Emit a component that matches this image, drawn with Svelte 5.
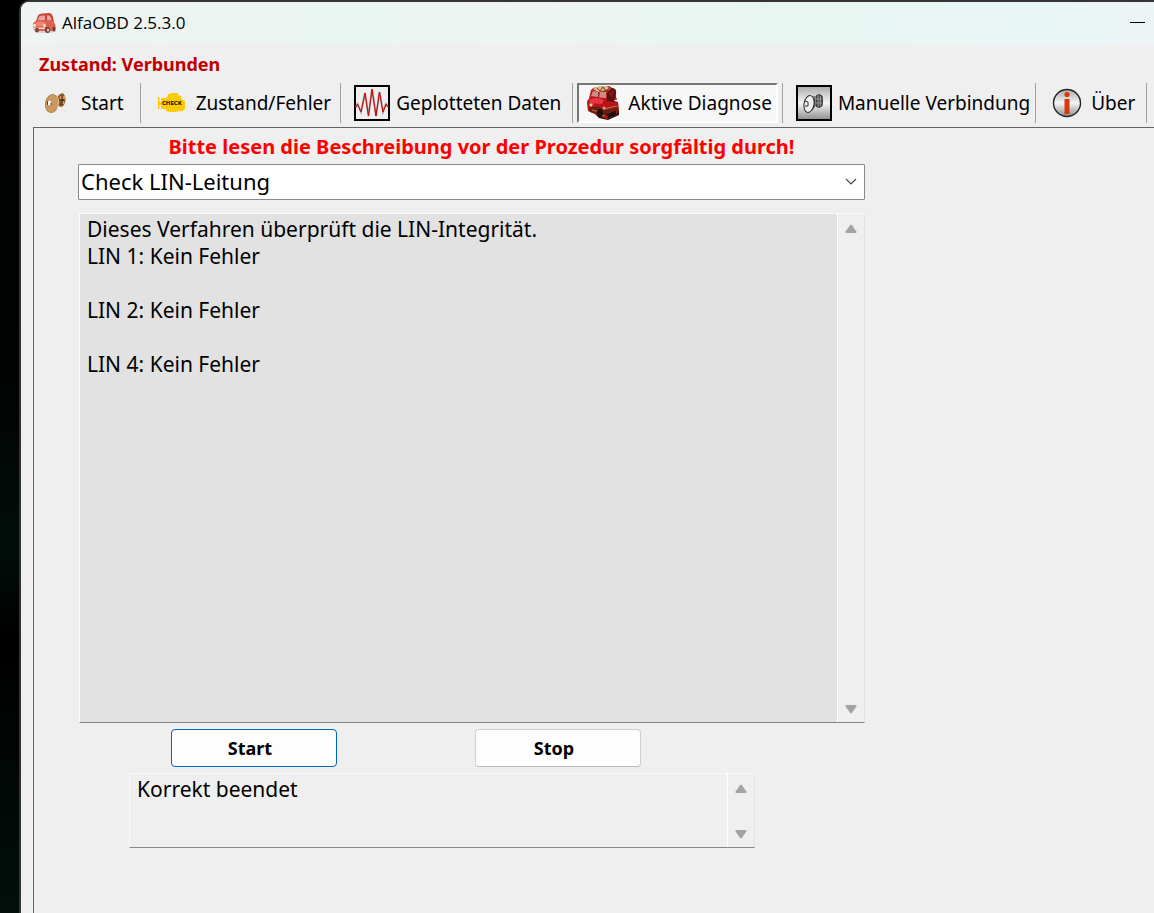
<script lang="ts">
	const procedures = ['Check LIN-Leitung'];
	const tabs = [
		{ id: 'start', label: 'Start' },
		{ id: 'faults', label: 'Zustand/Fehler' },
		{ id: 'plot', label: 'Geplotteten Daten' },
		{ id: 'active', label: 'Aktive Diagnose' },
		{ id: 'manual', label: 'Manuelle Verbindung' },
		{ id: 'about', label: 'Über' }
	];

	let current = $state('active');
	let procedure = $state(procedures[0]);
	let log = $state(
		'Dieses Verfahren überprüft die LIN-Integrität.\nLIN 1: Kein Fehler\n\nLIN 2: Kein Fehler\n\nLIN 4: Kein Fehler'
	);
	let result = $state('Korrekt beendet');

	function start() {
		result = 'Korrekt beendet';
	}

	function stop() {
		result = '';
	}
</script>

{#snippet scrollbar()}
	<div class="scrollbar" aria-hidden="true">
		<svg width="12" height="10" viewBox="0 0 12 10">
			<path d="M5 1.2Q6 0 7 1.2L11.4 7.5Q12 9 10.5 9H1.5Q0 9 .6 7.5Z" fill="#a3a3a3" />
		</svg>
		<svg width="12" height="10" viewBox="0 0 12 10">
			<path d="M5 8.8Q6 10 7 8.8L11.4 2.5Q12 1 10.5 1H1.5Q0 1 .6 2.5Z" fill="#a3a3a3" />
		</svg>
	</div>
{/snippet}

<div class="desktop">
	<div class="window">
		<header class="titlebar">
			<svg width="24" height="22" viewBox="0 0 24 22">
				<ellipse cx="13" cy="19" rx="11" ry="2" fill="#d9cdca" />
				<path d="M4 9 6 3.500Q7 1.500 11 1.500L17 1Q20 1 21 5L22 10Z" fill="#c9473c" />
				<path d="M5.500 8.500 7.300 4.500Q8 3.500 13 3.500v5ZM15 3.500H17.500q1.500 1 2 5H15Z" fill="#e9a79e" />
				<path d="M1 12Q2 8.500 7 8.500L19 8.500Q23.500 10 23.500 14V17L20 19H5L1 17Z" fill="#e0604f" />
				<path d="M3 11Q8 8.500 14 11L13 14H4Z" fill="#f28573" />
				<path d="M1 15.500H13V17H1Z" fill="#f6d8cc" />
				<circle cx="2.500" cy="13.500" r="1.400" fill="#fff0dc" />
				<circle cx="12.500" cy="13.500" r="1.500" fill="#ffe3c2" />
				<ellipse cx="5" cy="18" rx="2" ry="2.500" fill="#7b4a44" />
				<ellipse cx="15.500" cy="18" rx="2.500" ry="3" fill="#6b3d38" />
				<ellipse cx="16" cy="18" rx="1.200" ry="1.600" fill="#ddcac3" />
				<ellipse cx="22" cy="17" rx="1.500" ry="2.500" fill="#703c35" />
			</svg>
			<h1>AlfaOBD 2.5.3.0</h1>
			<button class="minimize" aria-label="Minimieren"></button>
		</header>

		<p class="status">Zustand: Verbunden</p>

		<nav class="toolbar">
			{#each tabs as tab (tab.id)}
				<div class="slot">
					<button class="tab {tab.id}" class:pressed={current === tab.id} onclick={() => (current = tab.id)}>
						{#if tab.id === 'start'}
							<svg width="24" height="24" viewBox="0 0 24 24">
								<path d="M14 5Q17 1 20 3Q23 8 20 14Q17 18 14 14Z" fill="#8f6030" />
								<path d="M16 5h2v3h-2zM19 5h2v3h-2zM17 10h3v3h-3z" fill="#d9a25c" />
								<path d="M18 4v10M20 8l-4 6M15 9h5" stroke="#4c2c10" />
								<ellipse cx="8" cy="12.500" rx="6.500" ry="9" transform="rotate(12 8 12.500)" fill="#cc9862" stroke="#b5824f" />
								<path d="M13 5q3 5 0 13" fill="none" stroke="#e3c39d" />
								<path d="M4 10h3v4H4z" fill="#fff" />
								<path d="M3.500 10v4M6 13h2" stroke="#5b3a1d" />
								<path d="M17 18l5 2M20 0v2" stroke="#eee0b4" />
							</svg>
						{:else if tab.id === 'faults'}
							<svg width="28" height="22" viewBox="0 0 28 22">
								<path d="M0 5h1.500v5H3V6h5l2-2V2h3V1h7v2l3 1v3l4 2v8l-2 2h-4l-3 1H10l-3-3H3v-4H1.500v4H0Z" fill="#fc0" />
								<text x="4" y="13" font-size="6" font-weight="700">CHECK</text>
							</svg>
						{:else if tab.id === 'plot'}
							<svg width="36" height="36" viewBox="0 0 36 36">
								<rect x="1" y="1" width="34" height="34" fill="#efefef" stroke="#000" stroke-width="2" />
								<path d="M2 22 3.500 19 7 27 11 8 14.500 31 18 4 22 31 25.500 7 29 27 32 19 34 22" fill="none" stroke="#999" stroke-width="1.800" />
								<path d="M2 22 3.500 19 7 27 11 8 14.500 31 18 4 22 31 25.500 7 29 27 32 19 34 22" fill="none" stroke="#d40000" />
							</svg>
						{:else if tab.id === 'active'}
							<svg width="34" height="36" viewBox="0 0 34 36">
								<path d="M6 27 12 33 21 35 32 30V25Z" fill="#2a100b" />
								<path d="M2 13 4 5Q6 2 12 2L22 1 27 4 30 15Z" fill="#b52226" />
								<path d="M6 4 12 1 20 1 23 4 11 7Z" fill="#d9b98c" />
								<path d="M10 3l3 3 3-4 3 4 3-3" fill="none" stroke="#693c21" />
								<path d="M4 11 6 6 11 7V12ZM13 7H19V13H12Z" fill="#c98e88" />
								<path d="M0 18Q0 13 6 12L18 13 31 17 32 25 29 30 20 34 10 30 1 26Z" fill="#b51419" />
								<path d="M2 15Q9 11 17 15L15 19 3 18Z" fill="#ea3340" />
								<path d="M20 8 25 3Q30 3 29 9L27 17 20 16Z" fill="#5e0f10" />
								<path d="M22 9l5-4-2 8Z" fill="#8d1515" />
								<path d="M2 22 13 22 18 25 30 22 31 26 19 31 3 27Z" fill="#6b1d13" />
								<path d="M2 19h5M17 24l13-3M5 25l8 2M10 29l8 2" stroke="#c07a40" />
								<circle cx="4" cy="20" r="1.500" fill="#ffd1a6" />
								<circle cx="17" cy="23" r="1.500" fill="#e9a06b" />
								<ellipse cx="13" cy="28" rx="3" ry="4" fill="#220f0b" />
								<path d="M20 29l9-3v4l-8 3z" fill="#160b09" />
							</svg>
						{:else if tab.id === 'manual'}
							<svg width="36" height="36" viewBox="0 0 36 36">
								<defs>
									<linearGradient id="metal" x2="0" y2="1">
										<stop stop-color="#aaa" />
										<stop offset=".5" stop-color="#f5f5f5" />
										<stop offset="1" stop-color="#8d8d8d" />
									</linearGradient>
								</defs>
								<rect x="1" y="1" width="34" height="34" fill="url(#metal)" stroke="#000" stroke-width="2" />
								<path d="M20 11q3-3 6 0 1 5 0 10-4 3-6 0Z" fill="#555" stroke="#333" />
								<path d="M22 10v12M24.500 11v10M20 14h6M20 18h6" stroke="#aaa" stroke-width=".7" />
								<ellipse cx="13" cy="19" rx="5" ry="8.500" transform="rotate(10 13 19)" fill="#eee" stroke="#222" />
								<path d="M9 16l3 1v4H9M18 11l1 10-3 4" fill="none" stroke="#333" />
							</svg>
						{:else}
							<svg width="30" height="30" viewBox="0 0 30 30">
								<circle cx="15" cy="15" r="13.500" fill="url(#metal)" stroke="#222" stroke-width="1.400" />
								<circle cx="15" cy="6.500" r="2.600" fill="#d63a0c" />
								<path d="M12.500 11h5v15h-5z" fill="#d63a0c" />
							</svg>
						{/if}
						<span>{tab.label}</span>
					</button>
				</div>
			{/each}
		</nav>

		<main class="page">
			<form class="procedure" onsubmit={(e) => e.preventDefault()}>
				<label for="procedure">Bitte lesen die Beschreibung vor der Prozedur sorgfältig durch!</label>
				<div class="picker">
					<select id="procedure" bind:value={procedure}>
						{#each procedures as name}
							<option>{name}</option>
						{/each}
					</select>
					<svg class="chevron" width="12" height="8" viewBox="0 0 12 8">
						<path d="M1 1l5 5 5-5" fill="none" stroke="#444" stroke-width="1.100" />
					</svg>
				</div>

				<div class="memo log">
					<textarea readonly aria-label="Beschreibung" value={log}></textarea>
					{@render scrollbar()}
				</div>

				<div class="actions">
					<button type="button" class="default" onclick={start}>Start</button>
					<button type="button" onclick={stop}>Stop</button>
				</div>

				<div class="memo result">
					<textarea readonly aria-label="Ergebnis" value={result}></textarea>
					{@render scrollbar()}
				</div>
			</form>
		</main>
	</div>
</div>

<style>
	:global(body) {
		margin: 0;
		background: #020504;
	}

	* {
		box-sizing: border-box;
	}

	.desktop {
		min-height: 100vh;
		padding-left: 19px;
		display: flex;
		overflow: hidden;
		background: linear-gradient(#000 0%, #010303 40%, #020d0a 60%, #000 70%, #020f0b 100%);
		font-family: "Noto Sans", "Open Sans", sans-serif;
		color: #000;
	}

	.window {
		flex: 1;
		min-width: 0;
		display: flex;
		flex-direction: column;
		border-top: 2px solid #333;
		border-left: 2px solid #333;
		border-top-left-radius: 10px;
		background: #efefef;
		overflow: hidden;
	}

	.titlebar {
		height: 43px;
		display: flex;
		align-items: center;
		gap: 6px;
		padding: 0 9px 2px 11px;
		background: linear-gradient(90deg, #eff3f3, #eaf5f1 30%, #eef4f2 45%, #e8f6f1 65%, #e9f6f6 90%, #edf4f6);
	}

	h1 {
		flex: 1;
		margin: 0;
		font-family: "Open Sans", sans-serif;
		font-size: 17px;
		font-weight: 400;
	}

	.minimize {
		width: 15px;
		height: 16px;
		padding: 0;
		border: none;
		background: linear-gradient(#000, #000) center / 15px 1px no-repeat;
	}

	.status {
		margin: 0;
		padding: 6px 18px 0;
		font-size: 18px;
		font-weight: 700;
		line-height: 26px;
		color: #c00000;
	}

	.toolbar {
		display: flex;
		height: 50px;
		padding: 6px 0 0 10px;
	}

	.slot {
		display: flex;
		flex: none;
		height: 40px;
		padding: 0 4px;
		border-right: 1px solid #a0a0a0;
	}

	.tab {
		display: flex;
		align-items: center;
		gap: 6px;
		padding: 0 6px 0 8px;
		border: 1px solid transparent;
		background: none;
		font-family: inherit;
		font-size: 19px;
		white-space: nowrap;
		color: inherit;
	}

	.tab svg {
		flex: none;
	}

	.tab.start {
		gap: 13px;
		padding-right: 11px;
	}

	.tab.faults {
		gap: 10px;
		padding: 0 4px 0 12px;
	}

	.tab.manual {
		padding-right: 0;
	}

	.tab.about {
		gap: 9px;
		padding-left: 11px;
	}

	.tab.pressed {
		gap: 7px;
		padding: 0 4px 0 8px;
		border: 2px solid;
		border-color: #777 #fff #fff #777;
		background: #f7f7f7;
	}

	.page {
		flex: 1;
		margin-left: 12px;
		padding: 6px 44px 20px;
		border-top: 1px solid #646464;
		border-left: 1px solid #646464;
	}

	.procedure {
		display: flex;
		flex-direction: column;
		max-width: 787px;
	}

	label {
		height: 30px;
		padding-left: 20px;
		font-size: 20px;
		font-weight: 700;
		line-height: 26px;
		text-align: center;
		white-space: nowrap;
		color: #f00;
	}

	.picker {
		position: relative;
		margin-bottom: 13px;
	}

	select {
		display: block;
		width: 100%;
		height: 36px;
		padding: 0 32px 2px 2px;
		appearance: none;
		border: 1px solid #8a8a8a;
		border-radius: 1px;
		background: #fff;
		font-family: inherit;
		font-size: 22px;
		color: inherit;
	}

	.chevron {
		position: absolute;
		top: 14px;
		right: 8px;
		pointer-events: none;
	}

	.memo {
		display: flex;
		border: 1px solid #fafafa;
		border-right-color: #e3e3e3;
		border-bottom-color: #868686;
	}

	textarea {
		flex: 1;
		min-width: 0;
		padding: 2px 7px;
		border: none;
		outline: none;
		resize: none;
		overflow: hidden;
		background: transparent;
		font-family: inherit;
		font-size: 21px;
		line-height: 27px;
		color: inherit;
	}

	.scrollbar {
		width: 27px;
		display: flex;
		flex-direction: column;
		align-items: center;
		justify-content: space-between;
		padding: 10px 0 8px;
		border-left: 1px solid #fff;
		background: #efefef;
	}

	.log {
		height: 510px;
		margin-left: 1px;
		background: #e2e2e2;
	}

	.actions {
		display: flex;
		justify-content: space-between;
		gap: 20px;
		margin: 6px 224px 6px 93px;
	}

	.actions button {
		width: 166px;
		height: 38px;
		padding: 0 8px 0 0;
		border: 1px solid #d0d0d0;
		border-bottom-color: #b8b8b8;
		border-radius: 4px;
		background: #fdfdfd;
		font-family: inherit;
		font-size: 18px;
		font-weight: 700;
		color: inherit;
	}

	.actions .default {
		border-color: #0067c0;
	}

	.result {
		height: 75px;
		margin: 0 110px 0 51px;
	}
</style>
